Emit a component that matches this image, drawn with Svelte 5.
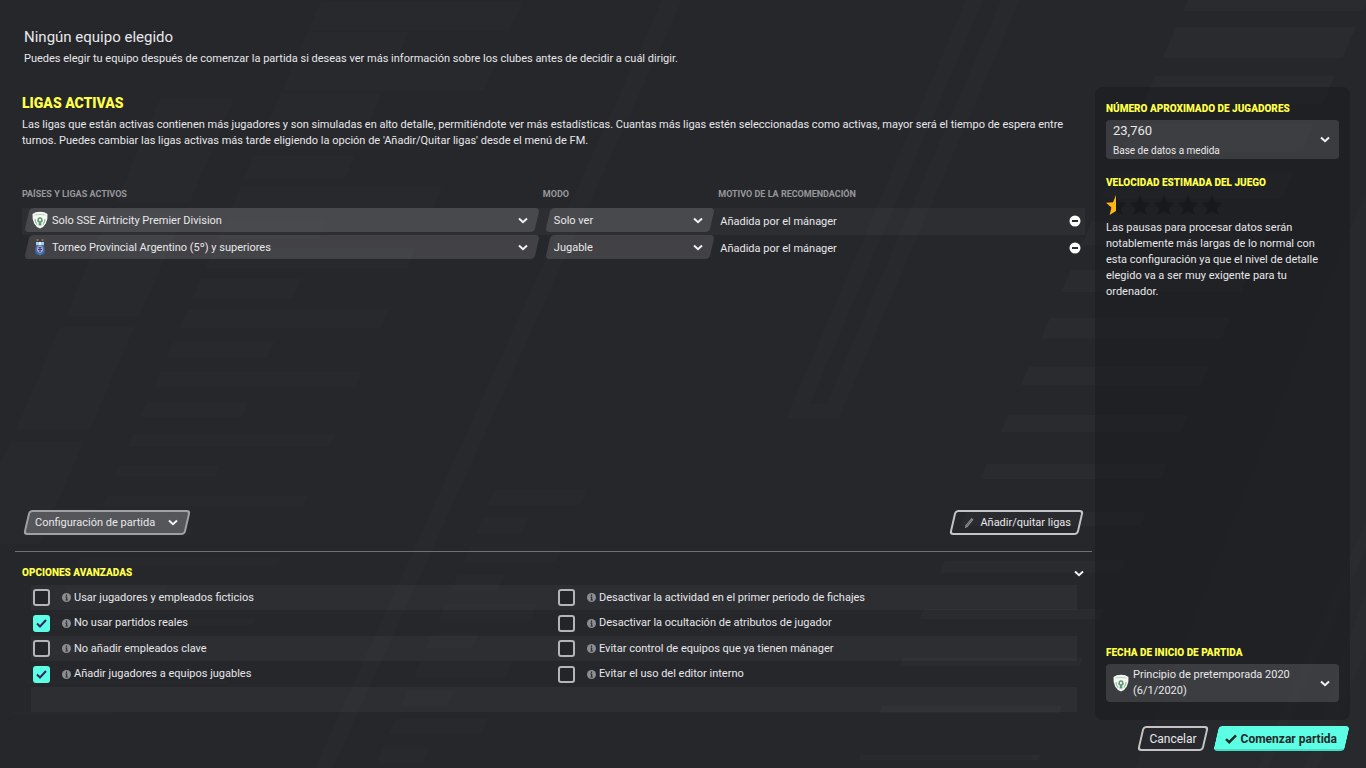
<script>
	let leagues = $state([
		{ name: 'Solo SSE Airtricity Premier Division', crest: 'irl', mode: 'Solo ver', reason: 'Añadida por el mánager' },
		{ name: 'Torneo Provincial Argentino (5º) y superiores', crest: 'arg', mode: 'Jugable', reason: 'Añadida por el mánager' }
	]);

	let options = $state([
		{ label: 'Usar jugadores y empleados ficticios', on: false },
		{ label: 'Desactivar la actividad en el primer periodo de fichajes', on: false },
		{ label: 'No usar partidos reales', on: true },
		{ label: 'Desactivar la ocultación de atributos de jugador', on: false },
		{ label: 'No añadir empleados clave', on: false },
		{ label: 'Evitar control de equipos que ya tienen mánager', on: false },
		{ label: 'Añadir jugadores a equipos jugables', on: true },
		{ label: 'Evitar el uso del editor interno', on: false }
	]);

	let optionRows = $derived([0, 2, 4, 6].map((i) => options.slice(i, i + 2)));

	const SLANT = 0.43;

	// one slanted bar of the backdrop
	function bar(x, y, w, h) {
		const d = h * SLANT;
		return `${x},${y} ${x + w},${y} ${x + w - d},${y + h} ${x - d},${y + h}`;
	}

	const leftBars = [];
	const rightBars = [];
	for (let i = 0; i < 24; i++) leftBars.push(bar(321 - 13.4 * i, 1 + 30.9 * i, i % 2 ? 101 : 202, 30 - 1.2 * i));
	for (let i = 0; i < 10; i++) leftBars.push(bar(495 - 12.4 * i, 489 + 28.7 * i, i % 2 ? 46 : 92, 16));
	for (let i = 0; i < 4; i++) leftBars.push(bar(160 - 50 * i, 99 + 114 * i, 74, 103));
	for (let i = -1; i < 16; i++) rightBars.push(bar(1176 - 21 * i, 27 + 48.5 * i, 180, 31 - 1.7 * i));

	const star = 'M10 0l3 7.2 7 .5-5.400 4.900 1.800 7.400L10 16l-6.400 4 1.800-7.400L0 7.700l7-.5z';
</script>

{#snippet chevron()}
	<svg class="chevron" viewBox="0 0 10 7" aria-hidden="true"><path d="M1 1.500l4 3.700 4-3.700" fill="none" stroke="#f2f2f3" stroke-width="2" /></svg>
{/snippet}

{#snippet crest(kind)}
	{#if kind === 'irl'}
		<svg class="crest" viewBox="0 0 16 18" aria-hidden="true">
			<path d="M.5 3Q3 .8 8 .8T15.500 3q.5 5-1.700 9.500Q12 16 8 17.500 4 16 2.200 12.500 0 8 .5 3z" fill="#f4f7f3" />
			<path d="M2.500 3.500q5.500-1.500 11 0v1Q8 3.500 2.500 4.500z" fill="#c3d6c6" />
			<path d="M3 8q0 3.500 2.200 5.500M13 8q0 3.500-2.200 5.500" stroke="#8fc29f" stroke-width="1.200" fill="none" />
			<path d="M8 6.200a2.500 2.500 0 0 1 2.500 2.600q1 2-1.400 2.600l.4 3H6.500l.4-3Q4.500 10.800 5.500 8.800A2.500 2.500 0 0 1 8 6.200z" fill="#5e9673" />
			<circle cx="8" cy="9" r="1.200" fill="#e8efe6" />
		</svg>
	{:else}
		<svg class="crest" viewBox="0 0 16 18" aria-hidden="true">
			<circle cx="5.500" cy="2" r="1" fill="#8f7a62" />
			<circle cx="10.500" cy="2" r="1" fill="#8f7a62" />
			<path d="M4 4h8v4l1 3-1 4.500L8 17.500 4 15.500 3 11l1-3z" fill="#4470a8" />
			<path d="M4 4h8v3H4z" fill="#a9cbea" />
			<path d="M7 4h2v3H7z" fill="#e8f1f8" />
			<ellipse cx="8" cy="11.200" rx="3" ry="3.600" fill="#aaa6cb" />
			<path d="M6.500 9.500h3M6 11.500h4M8 9v5" stroke="#4c3f85" stroke-width="1.200" />
			<path d="M3.500 14l1.500 2.500M12.500 14L11 16.500" stroke="#2460a0" stroke-width="1.500" />
		</svg>
	{/if}
{/snippet}

{#snippet info()}
	<svg class="info" viewBox="0 0 10 10" aria-hidden="true">
		<circle cx="5" cy="5" r="5" fill="#8c8d90" />
		<path d="M5 1.800v1.500M3.900 4.600H5.200v3.200M3.800 7.800h2.700" stroke="#292a2d" stroke-width="1.200" fill="none" />
	</svg>
{/snippet}

<div class="screen">
	<svg class="backdrop" viewBox="0 0 1366 768" preserveAspectRatio="xMidYMid slice" aria-hidden="true">
		<g fill="#fff" fill-opacity="0.011">
			{#each leftBars as points}
				<polygon {points} />
			{/each}
			<path d="M662 0h20L333 768h-18z" />
			<path d="M966 0h17L810 404h16L1001 0h19L839 418h-53z" />
			<path d="M1366 190v578H1135z" />
			<path d="M1366 590v60l-48 118h-14zM1366 520v30l-98 218h-10z" />
		</g>
		<g fill="#fff" fill-opacity="0.02">
			{#each rightBars as points}
				<polygon {points} />
			{/each}
		</g>
	</svg>

	<header>
		<h1>Ningún equipo elegido</h1>
		<p>Puedes elegir tu equipo después de comenzar la partida si deseas ver más información sobre los clubes antes de decidir a cuál dirigir.</p>
	</header>

	<div class="body">
		<main>
			<section class="leagues">
				<h2 class="big">Ligas activas</h2>
				<p>Las ligas que están activas contienen más jugadores y son simuladas en alto detalle, permitiéndote ver más estadísticas. Cuantas más ligas estén seleccionadas como activas, mayor será el tiempo de espera entre turnos. Puedes cambiar las ligas activas más tarde eligiendo la opción de 'Añadir/Quitar ligas' desde el menú de FM.</p>

				<table>
					<thead>
						<tr>
							<th class="col-league">Países y ligas activos</th>
							<th class="col-mode">Modo</th>
							<th>Motivo de la recomendación</th>
							<th class="col-remove"></th>
						</tr>
					</thead>
					<tbody>
						{#each leagues as league}
							<tr>
								<td>
									<div class="picker with-crest">
										{@render crest(league.crest)}
										<select aria-label="Liga">
											<option>{league.name}</option>
										</select>
										{@render chevron()}
									</div>
								</td>
								<td>
									<div class="picker">
										<select aria-label="Modo" bind:value={league.mode}>
											<option>Solo ver</option>
											<option>Jugable</option>
										</select>
										{@render chevron()}
									</div>
								</td>
								<td class="reason">{league.reason}</td>
								<td class="remove">
									<button aria-label="Quitar liga">
										<svg viewBox="0 0 12 12"><circle cx="6" cy="6" r="5.500" fill="#fff" /><path d="M3 6h6" stroke="#2b2c30" stroke-width="2" /></svg>
									</button>
								</td>
							</tr>
						{/each}
					</tbody>
				</table>
			</section>

			<div class="actions">
				<button class="slanted filled">Configuración de partida {@render chevron()}</button>
				<button class="slanted">
					<svg class="pencil" viewBox="0 0 10 12" aria-hidden="true"><path d="M.8 11.200l.7-3L7.500 1l2 1.600-6 7.300z" fill="#8d8e91" /><path d="M2.200 9.300l5.400-6.600" stroke="#5d5e61" stroke-width=".8" /></svg>
					Añadir/quitar ligas
				</button>
			</div>

			<section class="advanced">
				<div class="advanced-head">
					<h2>Opciones avanzadas</h2>
					<button aria-label="Plegar opciones avanzadas">{@render chevron()}</button>
				</div>
				<div class="options">
					{#each optionRows as row}
						<div class="option-row">
							{#each row as option}
								<label>
									<input type="checkbox" bind:checked={option.on} />
									{@render info()}
									<span>{option.label}</span>
								</label>
							{/each}
						</div>
					{/each}
					<div class="option-row"></div>
				</div>
			</section>
		</main>

		<aside>
			<h2>Número aproximado de jugadores</h2>
			<button class="box players" aria-haspopup="listbox">
				<span class="box-text">
					<span class="count">23,760</span>
					<span class="small">Base de datos a medida</span>
				</span>
				{@render chevron()}
			</button>

			<h2 class="speed">Velocidad estimada del juego</h2>
			<div class="stars" role="img" aria-label="0,5 de 5">
				{#each [0, 1, 2, 3, 4] as i}
					<svg viewBox="0 0 20 20">
						<path d={star} fill="#18191b" />
						{#if i === 0}
							<path d="M10 0v16l-6.400 4 1.800-7.400L0 7.700l7-.5z" fill="#fdb515" />
						{/if}
					</svg>
				{/each}
			</div>
			<p>Las pausas para procesar datos serán notablemente más largas de lo normal con esta configuración ya que el nivel de detalle elegido va a ser muy exigente para tu ordenador.</p>

			<h2 class="date">Fecha de inicio de partida</h2>
			<button class="box" aria-haspopup="listbox">
				{@render crest('irl')}
				<span class="box-text">Principio de pretemporada 2020 (6/1/2020)</span>
				{@render chevron()}
			</button>
		</aside>
	</div>

	<footer>
		<button class="slanted">Cancelar</button>
		<button class="slanted primary">
			<svg class="tick" viewBox="0 0 12 10" aria-hidden="true"><path d="M1 5.200l3.200 3L11 1.300" fill="none" stroke="#26272b" stroke-width="2.400" /></svg>
			Comenzar partida
		</button>
	</footer>
</div>

<style>
	:global(body) {
		background: #26272b;
	}

	.screen {
		position: relative;
		isolation: isolate;
		box-sizing: border-box;
		min-height: 100vh;
		display: flex;
		flex-direction: column;
		padding: 0 16px 17px 15px;
		background: #26272b;
		color: #e8e8ea;
		font-family: Roboto, 'Liberation Sans', sans-serif;
		font-size: 11px;
		line-height: 16px;
	}

	.backdrop {
		position: absolute;
		inset: 0;
		width: 100%;
		height: 100%;
		z-index: -1;
	}

	h1, h2, p { margin: 0; }

	button, select {
		font: inherit;
		color: inherit;
		background: none;
		border: 0;
		padding: 0;
		margin: 0;
	}

	button { cursor: pointer; }

	header {
		padding: 27px 9px 20px;
	}

	h1 {
		font-size: 15px;
		font-weight: 400;
		line-height: 20px;
		margin-bottom: 4px;
	}

	h2 {
		color: #ffff4b;
		font-size: 10px;
		font-weight: 900;
		line-height: 16px;
		text-transform: uppercase;
	}

	.big { font-size: 14px; margin-bottom: 6px; }

	.chevron {
		width: 10px;
		height: 7px;
		flex: none;
	}

	.crest {
		width: 16px;
		height: 18px;
		flex: none;
	}

	.body {
		flex: 1;
		display: grid;
		grid-template-columns: minmax(0, 1fr) 255px;
		gap: 3px;
	}

	main {
		display: flex;
		flex-direction: column;
		padding-bottom: 8px;
	}

	.leagues {
		flex: 1;
		padding: 8px 7px 0;
	}

	table {
		width: 100%;
		table-layout: fixed;
		border-collapse: collapse;
		margin-top: 37px;
	}

	th {
		height: 22px;
		padding: 0;
		text-align: left;
		vertical-align: top;
		color: #97989b;
		font-size: 9px;
		font-weight: 700;
		line-height: 16px;
		text-transform: uppercase;
	}

	.col-league { width: 49%; }
	.col-mode { width: 16.5%; }
	.col-remove { width: 20px; }

	td {
		height: 27px;
		padding: 0;
	}

	tbody tr:nth-child(odd) { background: rgba(255, 255, 255, 0.035); }

	.picker {
		position: relative;
		isolation: isolate;
		display: flex;
		align-items: center;
		height: 24px;
		margin: 0 5px 3px 4px;
		padding: 0 10px 0 7px;
	}

	.picker.with-crest { padding-left: 6px; gap: 4px; }

	.picker::before {
		content: '';
		position: absolute;
		inset: 0 1px;
		z-index: -1;
		border-radius: 4px;
		background: rgba(255, 255, 255, 0.13);
		transform: skewX(-13deg);
	}

	.picker select {
		flex: 1;
		min-width: 0;
		height: 24px;
		padding-top: 1px;
		appearance: none;
	}

	.reason { padding-left: 2px; }

	.remove button {
		display: block;
		width: 12px;
		height: 12px;
		margin: 0 0 1px 4px;
	}

	.remove svg {
		display: block;
		width: 12px;
		height: 12px;
	}

	.actions {
		display: flex;
		justify-content: space-between;
		padding: 0 8px 16px;
	}

	.slanted {
		position: relative;
		isolation: isolate;
		display: flex;
		align-items: center;
		height: 25px;
		padding: 0 13px 0 12px;
	}

	.slanted::before {
		content: '';
		position: absolute;
		inset: 0 3px;
		z-index: -1;
		box-sizing: border-box;
		border: 2px solid #c4c4c6;
		border-radius: 4px;
		transform: skewX(-13deg);
	}

	.filled { gap: 13px; }
	.filled::before { background: #55565a; border-color: #a0a1a3; }

	.pencil {
		width: 10px;
		height: 12px;
		margin: 0 6px 0 3px;
	}

	.primary {
		color: #26272b;
		font-weight: 700;
		gap: 4px;
	}

	.primary::before {
		background: #5cffe4;
		border-color: #5cffe4;
		border-bottom-color: #43dcc4;
	}

	.tick {
		width: 12px;
		height: 10px;
	}

	.advanced { border-top: 1px solid #6f7073; }

	.advanced-head {
		display: flex;
		align-items: center;
		justify-content: space-between;
		padding: 13px 8px 4px 7px;
	}

	.advanced-head button {
		display: flex;
		align-items: center;
		height: 16px;
	}

	.options { padding: 0 15px 0 16px; }

	.option-row {
		display: grid;
		grid-template-columns: 1fr 1fr;
		gap: 4px;
		align-items: center;
		height: 26px;
	}

	.option-row:nth-child(odd) {
		height: 25px;
		background: rgba(255, 255, 255, 0.035);
	}

	.option-row label {
		display: flex;
		align-items: center;
	}

	input[type='checkbox'] {
		appearance: none;
		box-sizing: border-box;
		width: 17px;
		height: 17px;
		margin: 0 12px 0 2px;
		border: 2px solid #b4b5b7;
		border-radius: 3px;
		background: #242529;
	}

	input[type='checkbox']:checked {
		border-color: #5cffe4;
		background: #5cffe4 url("data:image/svg+xml,%3Csvg xmlns='http://www.w3.org/2000/svg' viewBox='0 0 13 13'%3E%3Cpath d='M2 6.500l3 3L11 3' fill='none' stroke='%23322663' stroke-width='2'/%3E%3C/svg%3E") center / 13px 13px;
	}

	.info {
		width: 9px;
		height: 9px;
		margin-right: 3px;
	}

	aside {
		display: flex;
		flex-direction: column;
		padding: 14px 11px 18px;
		border-radius: 8px;
		background: rgba(20, 22, 24, 0.4);
	}

	aside p { padding-right: 12px; }

	.box {
		display: flex;
		align-items: center;
		box-sizing: border-box;
		min-height: 38px;
		margin-top: 3px;
		padding: 3px 9px 3px 7px;
		border-radius: 4px;
		background: rgba(255, 255, 255, 0.13);
		text-align: left;
	}

	.players { padding-top: 0; padding-bottom: 0; }

	.box .crest { margin-right: 4px; }

	.box-text {
		flex: 1;
		display: flex;
		flex-direction: column;
	}

	.count { font-size: 13px; line-height: 22px; }
	.small { font-size: 10px; line-height: 17px; }

	.speed { margin-top: 16px; }

	.stars {
		display: flex;
		gap: 4px;
		margin: 4px 0 5px;
	}

	.stars svg {
		width: 20px;
		height: 20px;
	}

	.date { margin-top: auto; }

	footer {
		display: flex;
		justify-content: flex-end;
		gap: 3px;
		padding-top: 6px;
		font-size: 12px;
	}
</style>
